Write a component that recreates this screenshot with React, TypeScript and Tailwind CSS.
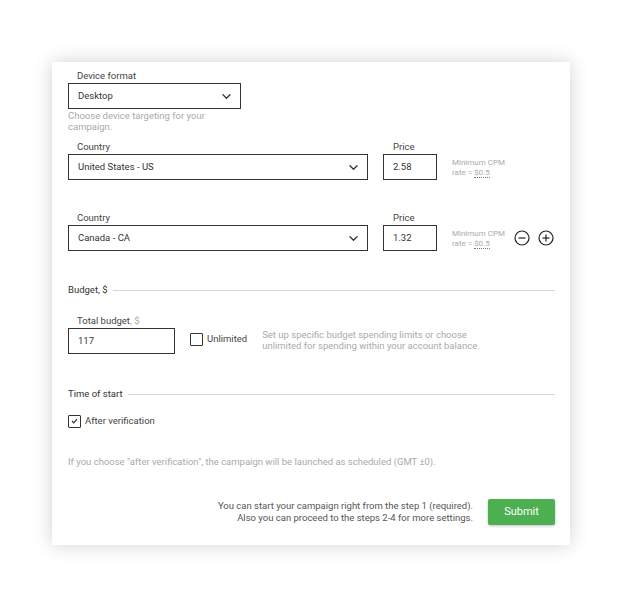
import React from "react";

function Chevron() {
  return (
    <svg width="9" height="5" viewBox="0 0 9 5" fill="none" className="shrink-0">
      <path d="M1 0.8l3.5 3.4 3.5-3.4" stroke="#333" strokeWidth="1.3" strokeLinecap="round" strokeLinejoin="round" />
    </svg>
  );
}

function CircleBtn({ plus }: { plus?: boolean }) {
  return (
    <svg width="16" height="16" viewBox="0 0 16 16" fill="none">
      <circle cx="8" cy="8" r="7" stroke="#222" strokeWidth="1.2" />
      <path d="M4.5 8h7" stroke="#222" strokeWidth="1.2" />
      {plus && <path d="M8 4.5v7" stroke="#222" strokeWidth="1.2" />}
    </svg>
  );
}

function Select({ value, width }: { value: string; width: string }) {
  return (
    <div className={`${width} h-[26px] border border-[#333] flex items-center justify-between pl-[9px] pr-[9px] text-[#333]`}>
      <span>{value}</span>
      <Chevron />
    </div>
  );
}

function MinCpm() {
  return (
    <div className="text-[8px] leading-[10px] text-[#aaa] pt-[2px] whitespace-nowrap">
      <div>Minimum CPM</div>
      <div>
        rate = <span className="border-b border-dotted border-[#777]">$0.5</span>
      </div>
    </div>
  );
}

function CountryRow({ country, price, controls }: { country: string; price: string; controls?: boolean }) {
  return (
    <div className="flex items-end">
      <div className="flex flex-col shrink-0">
        <div className="pl-[9px] h-[15px] leading-[15px] text-[#444]">Country</div>
        <Select value={country} width="w-[300px]" />
      </div>
      <div className="flex flex-col ml-[15px] shrink-0">
        <div className="pl-[10px] h-[15px] leading-[15px] text-[#444]">Price</div>
        <div className="w-[54px] h-[26px] border border-[#333] flex items-center pl-[9px] text-[#333]">{price}</div>
      </div>
      <div className="h-[26px] flex items-center ml-[15px] shrink-0">
        <MinCpm />
      </div>
      {controls && (
        <div className="h-[26px] flex items-center gap-[8px] ml-[9px] shrink-0">
          <CircleBtn />
          <CircleBtn plus />
        </div>
      )}
    </div>
  );
}

function SectionTitle({ title }: { title: string }) {
  return (
    <div className="flex items-center h-[14px]">
      <span className="text-[#333]">{title}</span>
      <div className="flex-1 h-px bg-[#d6d6d6] ml-[5px]" />
    </div>
  );
}

export default function App() {
  return (
    <div className="w-[624px] h-[608px] bg-white pt-[62px] pl-[52px] font-['Roboto',sans-serif] text-[9.5px]">
      <div className="w-[518px] h-[483px] bg-white shadow-[0_0_18px_rgba(0,0,0,0.18)] pl-4 pr-[15px] pt-[7px] flex flex-col">
        {/* Device format */}
        <div className="pl-[9px] h-[14px] leading-[14px] text-[#444]">Device format</div>
        <Select value="Desktop" width="w-[173px]" />
        <div className="text-[#aaa] leading-[11px] mt-[1px] w-[160px]">Choose device targeting for your campaign.</div>

        <div className="mt-[7px]">
          <CountryRow country="United States - US" price="2.58" />
        </div>
        <div className="mt-[30px]">
          <CountryRow country="Canada - CA" price="1.32" controls />
        </div>

        {/* Budget */}
        <div className="mt-[32px]">
          <SectionTitle title="Budget, $" />
        </div>
        <div className="mt-[17px] pl-[9px] h-[14px] leading-[14px] text-[#444]">
          Total budget<span className="text-[#aaa]">, $</span>
        </div>
        <div className="flex items-center">
          <div className="w-[107px] h-[26px] border border-[#333] flex items-center pl-[9px] text-[#333]">117</div>
          <label className="flex items-center ml-[15px] gap-[4px] text-[#444] -mt-[3px]">
            <span className="w-[13px] h-[13px] border border-[#333] rounded-[1px]" />
            Unlimited
          </label>
          <div className="ml-[15px] text-[#aaa] leading-[11px] w-[230px] -mt-[3px]">
            Set up specific budget spending limits or choose unlimited for spending within your account balance.
          </div>
        </div>

        {/* Time of start */}
        <div className="mt-[33px]">
          <SectionTitle title="Time of start" />
        </div>
        <label className="flex items-center gap-[4px] mt-[13px] text-[#444]">
          <span className="w-[13px] h-[13px] border border-[#333] rounded-[1px] flex items-center justify-center">
            <svg width="7" height="6" viewBox="0 0 7 6" fill="none">
              <path d="M1 3l1.8 1.8L6 1.2" stroke="#333" strokeWidth="1.2" />
            </svg>
          </span>
          After verification
        </label>
        <div className="mt-[27px] text-[#aaa] leading-[14px]">
          If you choose "after verification", the campaign will be launched as scheduled (GMT ±0).
        </div>

        {/* Footer */}
        <div className="flex items-center justify-end mt-[30px]">
          <div className="text-right text-[#555] leading-[12px]">
            <div>You can start your campaign right from the step 1 (required).</div>
            <div>Also you can proceed to the steps 2-4 for more settings.</div>
          </div>
          <button className="ml-[15px] w-[67px] h-[26px] bg-[#4caf50] text-white text-[11px] rounded-[2px] shadow-[0_1px_3px_rgba(0,0,0,0.25)]">
            Submit
          </button>
        </div>
      </div>
    </div>
  );
}
